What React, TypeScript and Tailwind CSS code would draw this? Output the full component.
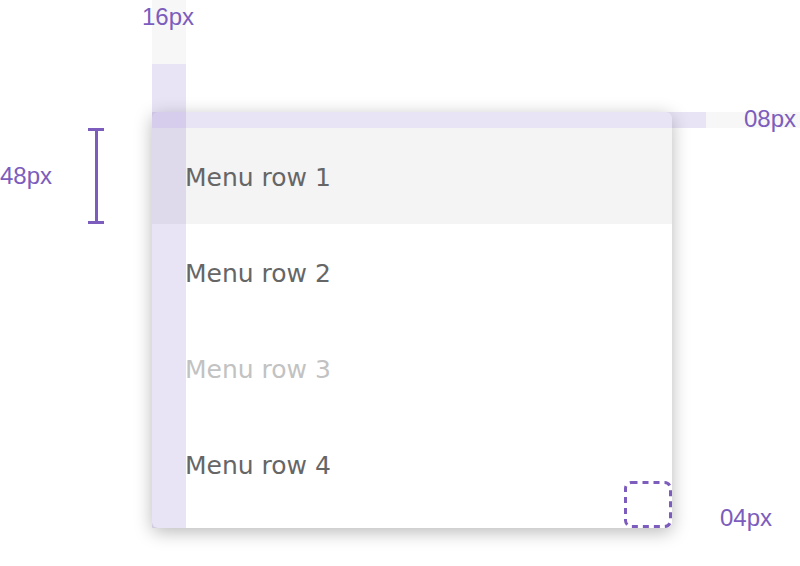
const rows = [
  { label: 'Menu row 1', active: true },
  { label: 'Menu row 2' },
  { label: 'Menu row 3', disabled: true },
  { label: 'Menu row 4' },
];

const labelCls = "absolute text-[24px] leading-none text-[#7c5cbd] font-['Liberation_Sans',sans-serif]";

export default function App() {
  return (
    <div className="relative h-[566px] w-[800px] overflow-hidden bg-white font-['DejaVu_Sans',sans-serif]">
      <div className="ml-[152px] mt-[112px] w-[520px] overflow-hidden rounded-[6px] bg-white py-4 shadow-[0_4px_18px_rgba(0,0,0,0.28)]">
        {rows.map((row) => (
          <div
            key={row.label}
            className={`flex h-24 items-center pl-[33px] pt-[3px] text-[25px] ${row.active ? 'bg-[#f4f4f4]' : ''} ${row.disabled ? 'text-[#c2c2c2]' : 'text-[#666666]'}`}
          >
            {row.label}
          </div>
        ))}
      </div>

      {/* spec overlays */}
      <div className="absolute left-[152px] top-0 h-16 w-[34px] bg-[#f7f7f7]" />
      <div className="absolute left-[152px] top-16 h-[464px] w-[34px] bg-[rgba(118,86,190,0.16)]" />
      <div className="absolute left-[152px] top-[112px] h-4 w-[554px] bg-[rgba(118,86,190,0.16)]" />
      <div className="absolute left-[706px] top-[112px] h-4 w-[94px] bg-[#f7f7f7]" />

      <div className="absolute left-[88px] top-[128px] flex h-[96px] w-4 flex-col items-center">
        <div className="h-[3px] w-4 bg-[#7c5cbd]" />
        <div className="w-[3px] flex-1 bg-[#7c5cbd]" />
        <div className="h-[3px] w-4 bg-[#7c5cbd]" />
      </div>

      <svg className="absolute left-[624px] top-[481px]" width="48" height="47" viewBox="0 0 48 47">
        <rect
          x="1.5"
          y="1.5"
          width="45"
          height="44"
          rx="6"
          fill="none"
          stroke="#7c5cbd"
          strokeWidth="3"
          strokeDasharray="6 5"
        />
      </svg>

      <span className={`${labelCls} left-[142px] top-[5px]`}>16px</span>
      <span className={`${labelCls} left-[744px] top-[107px]`}>08px</span>
      <span className={`${labelCls} left-0 top-[164px]`}>48px</span>
      <span className={`${labelCls} left-[720px] top-[506px]`}>04px</span>
    </div>
  );
}
